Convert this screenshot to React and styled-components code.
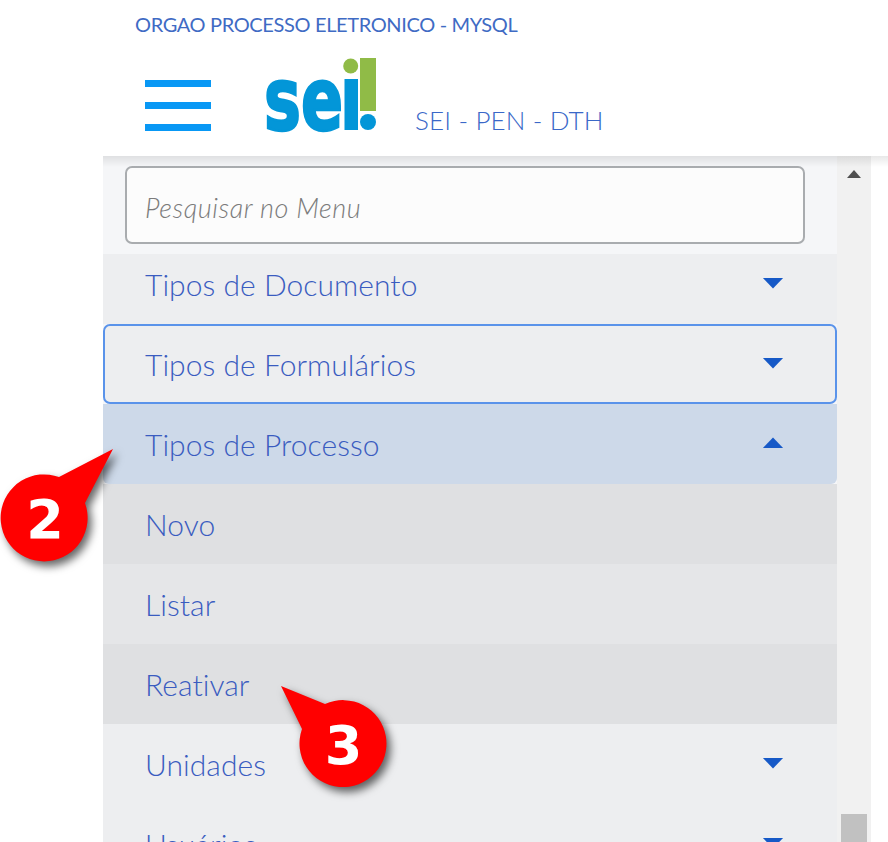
import styled, { createGlobalStyle } from 'styled-components';

const GlobalStyle = createGlobalStyle`
  html, body {
    margin: 0;
    padding: 0;
    height: 842px;
    overflow: hidden;
    background: #ffffff;
  }
  * { box-sizing: border-box; }
`;

const items = [
  { label: 'Tipos de Documento', arrow: 'down', first: true },
  { label: 'Tipos de Formulários', arrow: 'down', focused: true },
  { label: 'Tipos de Processo', arrow: 'up', open: true },
  { label: 'Novo', sub: 'dark' },
  { label: 'Listar', sub: 'light' },
  { label: 'Reativar', sub: 'dark' },
  { label: 'Unidades', arrow: 'down' },
  { label: 'Usuários', arrow: 'down' },
];

function Arrow({ dir }) {
  return (
    <ArrowBox viewBox="0 0 24 13" $dir={dir}>
      <path d="M1 1h22L12 12.5z" fill="#1659c7" />
    </ArrowBox>
  );
}

function Logo() {
  return (
    <LogoSvg viewBox="0 0 114 80">
      <text
        x="0"
        y="73"
        fontFamily="'DejaVu Sans', sans-serif"
        fontWeight="700"
        fontSize="88"
        fill="#0396d8"
        stroke="#0396d8"
        strokeWidth="2.5"
        textLength="79"
        lengthAdjust="spacingAndGlyphs"
      >
        se
      </text>
      <rect x="80.5" y="22" width="13.5" height="51" fill="#0396d8" />
      <circle cx="86.7" cy="9" r="7.5" fill="#90bb47" />
      <rect x="96" y="1" width="16" height="53" fill="#90bb47" />
      <circle cx="104" cy="65" r="8" fill="#0396d8" />
    </LogoSvg>
  );
}

function Callout({ tail, x, y, numX, numY, children }) {
  return (
    <CalloutWrap $x={x} $y={y}>
      <svg width="130" height="130" viewBox="0 0 130 130">
        <path d={tail} fill="#ff0000" />
      </svg>
      <CalloutNumber $x={numX} $y={numY}>{children}</CalloutNumber>
    </CalloutWrap>
  );
}

export default function App() {
  return (
    <>
      <GlobalStyle />
      <Page>
        <Header>
          <OrgName>ORGAO PROCESSO ELETRONICO - MYSQL</OrgName>
          <Brand>
            <Hamburger>
              <span />
              <span />
              <span />
            </Hamburger>
            <Logo />
            <SystemName>SEI - PEN - DTH</SystemName>
          </Brand>
        </Header>
        <Body>
          <Sidebar>
            <SearchArea>
              <SearchInput placeholder="Pesquisar no Menu" />
            </SearchArea>
            {items.map((item) => (
              <MenuRow
                key={item.label}
                $focused={item.focused}
                $open={item.open}
                $sub={item.sub}
                $first={item.first}
              >
                {item.label}
                {item.arrow && <Arrow dir={item.arrow} />}
              </MenuRow>
            ))}
          </Sidebar>
          <Scrollbar>
            <ScrollUp />
            <ScrollThumb />
          </Scrollbar>
        </Body>
        <Callout
          x={0}
          y={445}
          numX={45}
          numY={75}
          tail="M113 4 L59 32 A43.5 43.5 0 1 0 85 58 Z"
        >
          2
        </Callout>
        <Callout
          x={275}
          y={680}
          numX={68.5}
          numY={66}
          tail="M6 6 L50 24 A43.5 43.5 0 1 1 27 49 Z"
        >
          3
        </Callout>
      </Page>
    </>
  );
}

const Page = styled.div`
  position: relative;
  width: 888px;
  height: 842px;
  overflow: hidden;
  font-family: 'Lato', 'Liberation Sans', sans-serif;
`;

const Header = styled.header`
  height: 156px;
  padding: 14px 0 0 135px;
  background: #ffffff;
`;

const OrgName = styled.div`
  font-size: 20px;
  line-height: 22px;
  letter-spacing: -0.36px;
  color: #3f6bc4;
  margin-top: -1px;
`;

const Brand = styled.div`
  display: flex;
  align-items: flex-end;
  height: 80px;
  margin-top: 22px;
`;

const Hamburger = styled.div`
  display: flex;
  flex-direction: column;
  justify-content: space-between;
  width: 66px;
  height: 51px;
  margin: 0 0 6px 10px;

  span {
    display: block;
    height: 7px;
    background: #0898f5;
  }
`;

const LogoSvg = styled.svg`
  width: 114px;
  height: 80px;
  margin: 0 0 0 53px;
  flex: none;
  overflow: visible;
`;

const SystemName = styled.div`
  margin: 0 0 2px 37px;
  font-size: 26px;
  line-height: 30px;
  font-weight: 300;
  letter-spacing: 0.15px;
  color: #3a68c8;
`;

const Body = styled.div`
  position: relative;
  display: flex;
  height: 686px;
  margin-left: 103px;

  &::after {
    content: '';
    position: absolute;
    top: 0;
    left: 0;
    right: 0;
    height: 11px;
    background: linear-gradient(rgba(0, 0, 0, 0.09), rgba(0, 0, 0, 0));
    pointer-events: none;
  }
`;

const Sidebar = styled.nav`
  width: 734px;
  flex: none;
  background: #f5f6f8;
  overflow: hidden;
`;

const SearchArea = styled.div`
  height: 98px;
  padding: 10px 32px 10px 22px;
`;

const SearchInput = styled.input`
  display: block;
  width: 100%;
  height: 78px;
  padding: 5px 18px 0;
  border: 2px solid #a9acaf;
  border-radius: 7px;
  background: #fcfcfc;
  font-family: inherit;
  font-size: 27px;
  font-style: italic;
  font-weight: 300;
  letter-spacing: 0.55px;
  outline: none;

  &::placeholder {
    color: #7b7b7b;
    opacity: 1;
  }
`;

const rowBackground = ({ $open, $sub }) => {
  if ($open) return '#cdd9e9';
  if ($sub === 'dark') return '#dfe0e2';
  if ($sub === 'light') return '#e5e6e8';
  return '#edeef0';
};

const MenuRow = styled.div`
  display: flex;
  align-items: center;
  justify-content: space-between;
  height: ${({ $first }) => ($first ? 70 : 80)}px;
  padding: ${({ $first }) => ($first ? '0 0 10px' : '0')} 0;
  padding-left: ${({ $focused }) => ($focused ? 40 : 42)}px;
  padding-right: ${({ $focused }) => ($focused ? 51 : 53)}px;
  background: ${rowBackground};
  border: ${({ $focused }) => ($focused ? '2px solid #5a93ea' : 'none')};
  border-radius: ${({ $focused, $open }) => ($focused ? '7px' : $open ? '0 0 6px 6px' : '0')};
  font-size: 30px;
  font-weight: 300;
  letter-spacing: 0.05px;
  color: #3a5cc0;
`;

const ArrowBox = styled.svg`
  width: 22px;
  height: 12px;
  flex: none;
  margin-top: -2px;
  transform: ${({ $dir }) => ($dir === 'up' ? 'rotate(180deg)' : 'none')};
`;

const Scrollbar = styled.div`
  position: relative;
  width: 34px;
  flex: none;
  background: #f1f1f1;
`;

const ScrollUp = styled.div`
  position: absolute;
  top: 14px;
  left: 10px;
  width: 0;
  height: 0;
  border-left: 7px solid transparent;
  border-right: 7px solid transparent;
  border-bottom: 8px solid #505050;
`;

const ScrollThumb = styled.div`
  position: absolute;
  top: 658px;
  left: 4px;
  width: 26px;
  height: 40px;
  background: #c1c1c1;
`;

const CalloutWrap = styled.div`
  position: absolute;
  z-index: 2;
  left: ${({ $x }) => $x}px;
  top: ${({ $y }) => $y}px;
  width: 130px;
  height: 130px;
  filter: drop-shadow(4px 5px 4px rgba(0, 0, 0, 0.6));

  svg {
    display: block;
  }
`;

const CalloutNumber = styled.div`
  position: absolute;
  left: ${({ $x }) => $x}px;
  top: ${({ $y }) => $y}px;
  transform: translate(-50%, -50%);
  line-height: 1;
  font-family: 'DejaVu Sans', sans-serif;
  font-size: 54px;
  font-weight: 700;
  color: #ffffff;
`;
